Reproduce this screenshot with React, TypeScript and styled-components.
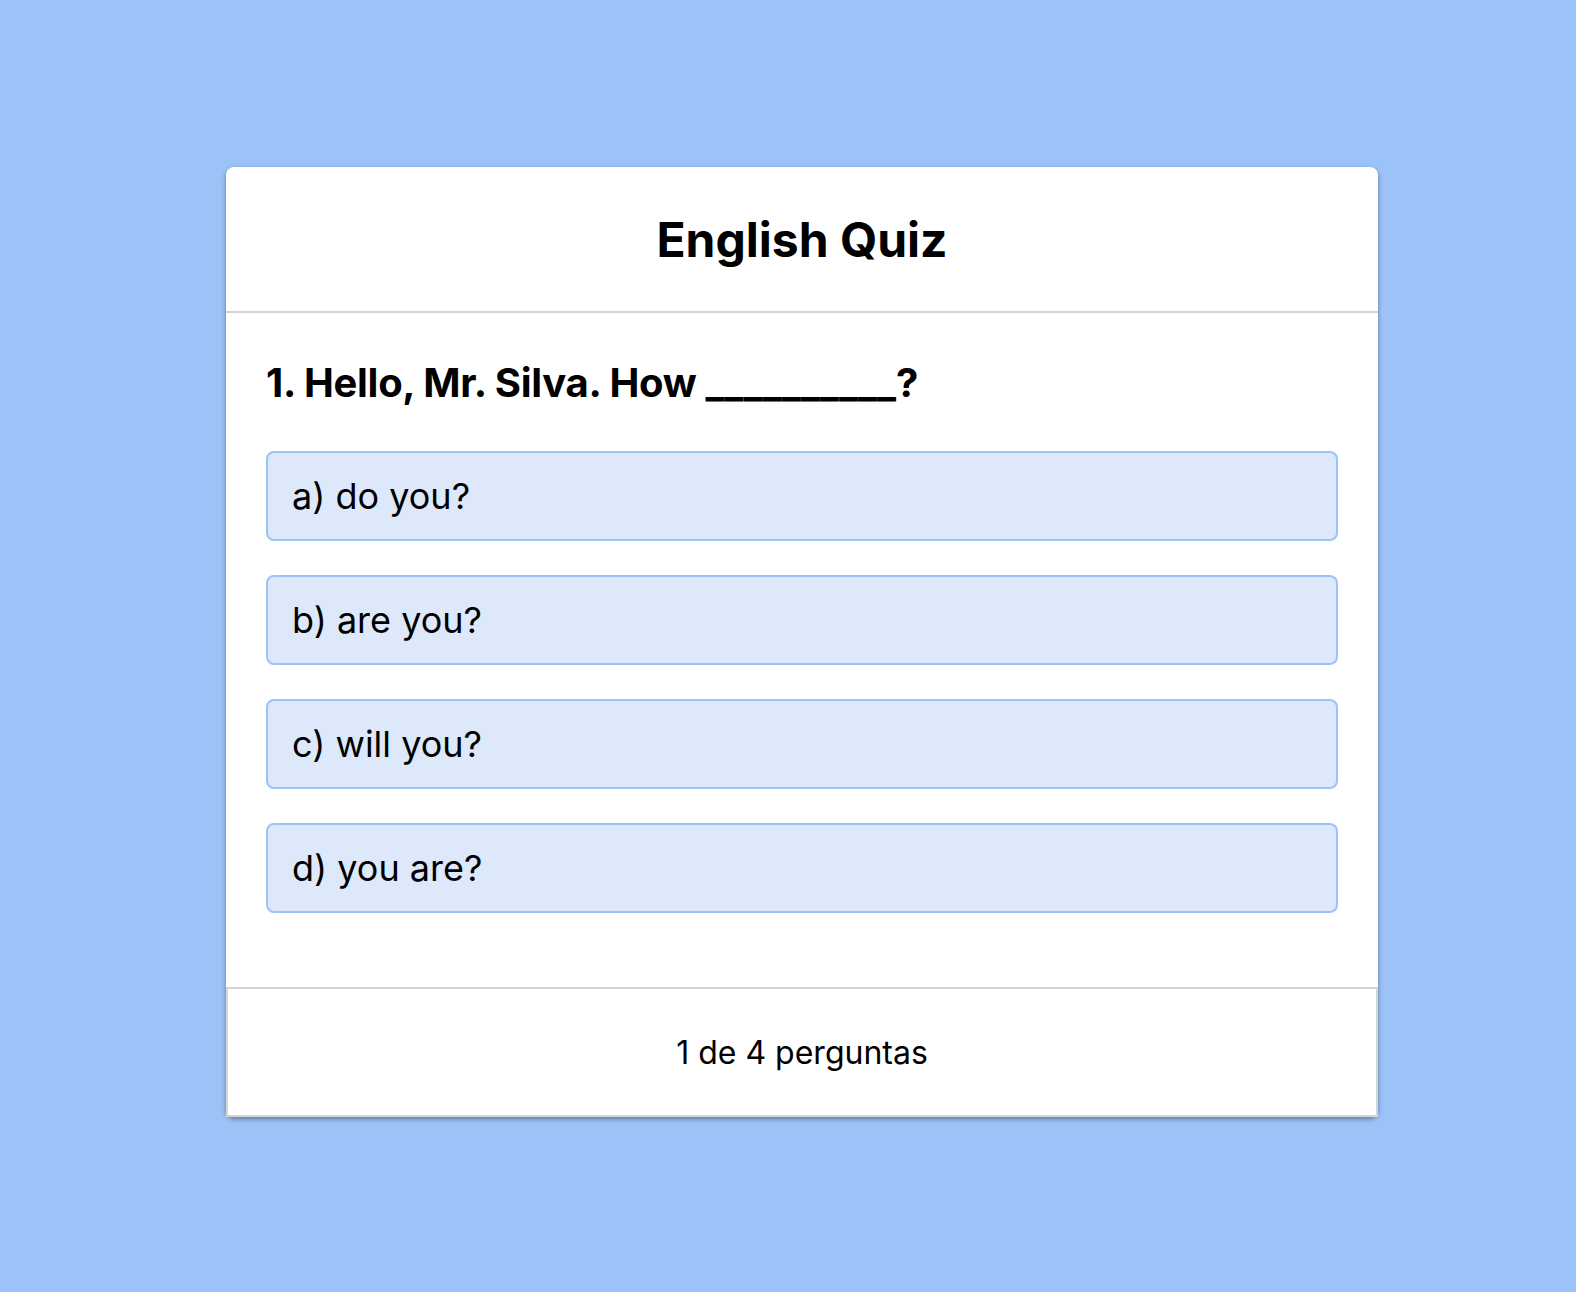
import React from "react";
import styled, { createGlobalStyle } from "styled-components";

const GlobalStyle = createGlobalStyle`
  html, body {
    margin: 0;
    padding: 0;
    background: #9cc3f7;
    font-family: Inter, "Noto Sans", sans-serif;
    color: #000;
  }
`;

const Page = styled.main`
  min-height: 1292px;
  display: flex;
  justify-content: flex-start;
  align-items: flex-start;
  padding: 167px 0 0 226px;
  box-sizing: border-box;
`;

const Card = styled.section`
  width: 1152px;
  background: #ffffff;
  border-radius: 8px;
  box-shadow: 0 2px 5px rgba(0, 0, 0, 0.38);
  display: flex;
  flex-direction: column;
`;

const Header = styled.header`
  height: 144px;
  display: flex;
  align-items: center;
  justify-content: center;
  border-bottom: 2px solid #d4d5d8;
`;

const Title = styled.h1`
  margin: 0;
  font-size: 48px;
  font-weight: 700;
`;

const Body = styled.div`
  padding: 46px 40px 40px;
`;

const Question = styled.h2`
  margin: 0 0 44px;
  font-size: 40px;
  line-height: 48px;
  font-weight: 700;
  letter-spacing: -0.3px;
`;

const Blank = styled.span`
  letter-spacing: 0;
`;

const Options = styled.ul`
  list-style: none;
  margin: 0;
  padding: 0;
  display: flex;
  flex-direction: column;
  gap: 34px;
`;

const Option = styled.li`
  height: 90px;
  box-sizing: border-box;
  display: flex;
  align-items: center;
  padding: 0 24px;
  background: #dde8fa;
  border: 2px solid #9cc3f7;
  border-radius: 8px;
  font-size: 36px;
  cursor: pointer;
`;

const Footer = styled.footer`
  margin-top: 34px;
  height: 130px;
  box-sizing: border-box;
  border: 2px solid #d4d5d8;
  display: flex;
  align-items: center;
  justify-content: center;
  font-size: 32px;
`;

const options = ["a) do you?", "b) are you?", "c) will you?", "d) you are?"];

export default function App() {
  return (
    <>
      <GlobalStyle />
      <Page>
        <Card>
          <Header>
            <Title>English Quiz</Title>
          </Header>
          <Body>
            <Question>
              1. Hello, Mr. Silva. How <Blank>__________</Blank>?
            </Question>
            <Options>
              {options.map((o) => (
                <Option key={o}>{o}</Option>
              ))}
            </Options>
          </Body>
          <Footer>1 de 4 perguntas</Footer>
        </Card>
      </Page>
    </>
  );
}
